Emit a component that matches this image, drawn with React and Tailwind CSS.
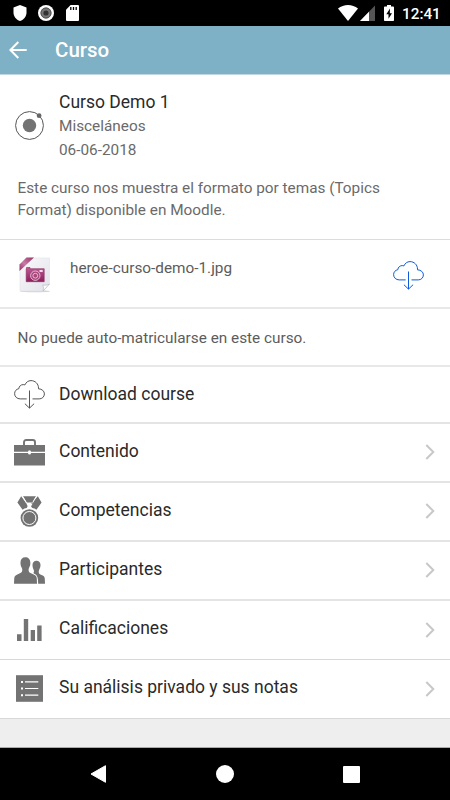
import React from "react";

function ShieldIcon() {
  return (
    <svg width="14" height="16" viewBox="0 0 14 16" className="shrink-0">
      <path d="M7 0l6.500 2.500v5.200c0 3.600-2.600 6.900-6.500 8.300C3.100 14.600.5 11.300.5 7.700V2.500z" fill="#fff" />
    </svg>
  );
}

function RecordIcon() {
  return (
    <svg width="16" height="16" viewBox="0 0 16 16" className="shrink-0">
      <circle cx="8" cy="8" r="8" fill="#fff" />
      <circle cx="8" cy="8" r="5.400" fill="#777" />
      <circle cx="8" cy="8" r="5.100" fill="none" stroke="#444" strokeWidth=".8" />
      <circle cx="8" cy="8" r="2.600" fill="#333" />
    </svg>
  );
}

function SdIcon() {
  return (
    <svg width="13" height="16" viewBox="0 0 13 16" className="shrink-0">
      <path d="M4.600 0H12a1 1 0 0 1 1 1v14a1 1 0 0 1-1 1H1a1 1 0 0 1-1-1V4.700z" fill="#fff" />
      <path d="M4.800 2v3M7.500 2v3M10.200 2v3" stroke="#000" strokeWidth="1.300" />
    </svg>
  );
}

function WifiIcon() {
  return (
    <svg width="20" height="16" viewBox="0 0 20 16" className="shrink-0">
      <path d="M0 3.600C5.700-1.200 14.300-1.200 20 3.600L10 16z" fill="#fff" />
    </svg>
  );
}

function SignalIcon() {
  return (
    <svg width="15" height="16" viewBox="0 0 15 16" className="shrink-0">
      <path d="M15 .5V16H0z" fill="#555" />
      <path d="M9 6.700V16H0z" fill="#fff" />
    </svg>
  );
}

function BatteryIcon() {
  return (
    <svg width="10" height="16" viewBox="0 0 10 16" className="shrink-0">
      <path d="M3 0h4v1.600h2.200c.5 0 .8.300.8.800v12.800c0 .5-.3.800-.8.800H.8c-.5 0-.8-.3-.8-.8V2.400c0-.5.3-.8.800-.8H3z" fill="#fff" />
      <path d="M6 3.600L2.300 9.300h2.200v4.500l3.500-5.600H5.800z" fill="#000" />
    </svg>
  );
}

function BackArrow() {
  return (
    <svg width="18" height="18" viewBox="0 0 18 18" className="shrink-0">
      <path d="M9.300 1L1.400 9l7.900 8M1.400 9H17.700" fill="none" stroke="#fff" strokeWidth="2" />
    </svg>
  );
}

function OrbitIcon() {
  return (
    <svg width="31" height="30" viewBox="0 0 31 30">
      <circle cx="15.500" cy="15.500" r="13.900" fill="none" stroke="#555" strokeWidth="1" />
      <circle cx="15.500" cy="15.500" r="6.700" fill="#737373" />
      <circle cx="25.100" cy="5.700" r="2.400" fill="#666" />
    </svg>
  );
}

function CloudDownload({ color }) {
  return (
    <svg width="31" height="29" viewBox="0 0 31 29" fill="none" stroke={color} strokeWidth="1">
      <path d="M12.700 18.900H6.200C3 18.900.6 16.600.6 13.700c0-2.700 1.800-4.600 4.200-5C5 6.300 6.900 4.600 9.200 4.600c.6 0 1.200.1 1.700.3C12 2.300 14.200.6 17 .6c4.200 0 7.500 3.300 7.500 7.400v.8c3.400.1 5.900 2.300 5.900 5.100 0 2.900-2.300 5-5.200 5h-6.700" />
      <path d="M15.500 10.500v17.500M10.900 23.700l4.600 4.400 4.600-4.400" />
    </svg>
  );
}

function ImageFileIcon() {
  return (
    <svg width="32" height="36" viewBox="0 0 32 36">
      <defs>
        <linearGradient id="paper" x1="0" y1="0" x2="1" y2="1">
          <stop offset="0" stopColor="#fafafc" />
          <stop offset="1" stopColor="#e1e2e9" />
        </linearGradient>
        <linearGradient id="camera" x1="0" y1="0" x2="0" y2="1">
          <stop offset="0" stopColor="#c05a96" />
          <stop offset="1" stopColor="#8c1f5c" />
        </linearGradient>
        <linearGradient id="ribbon" x1="1" y1="0" x2="0" y2="1">
          <stop offset="0" stopColor="#963064" />
          <stop offset=".55" stopColor="#c77ca6" />
          <stop offset="1" stopColor="#963064" />
        </linearGradient>
      </defs>
      <ellipse cx="16" cy="34.300" rx="15" ry="1" fill="#d3d3d8" />
      <path d="M1 1h29.500v26L24 34H1z" fill="url(#paper)" stroke="#e3e3e8" strokeWidth=".6" />
      <path d="M30.500 27c-2 1.300-4.300 1.400-6.700.9.800 2.200.9 4.300.2 6.100z" fill="#fff" stroke="#b9bac2" strokeWidth=".7" />
      <path d="M0 0h7.500L0 7.500z" fill="#fff" />
      <path d="M7.500.5h7.500L.5 14V7.500z" fill="url(#ribbon)" />
      <path d="M7.500 10.500h3.500v1.200h14.200v13H7.200V11.700h.3z" fill="url(#camera)" stroke="#8c2860" strokeWidth=".6" />
      <path d="M20.500 13h3.200v2h-3.200z" fill="#f2dce8" />
      <circle cx="16.300" cy="18.700" r="4.700" fill="#a8477b" stroke="#f0d6e4" strokeWidth=".8" />
      <circle cx="16.300" cy="18.700" r="2.400" fill="none" stroke="#f0d6e4" strokeWidth=".8" />
    </svg>
  );
}

function BriefcaseIcon() {
  return (
    <svg width="31" height="27" viewBox="0 0 31 27" className="mb-px">
      <path d="M10 6.500V3.200C10 1.800 10.800 1 12.200 1h6.600c1.400 0 2.200.8 2.200 2.200v3.300" fill="none" stroke="#737373" strokeWidth="1.900" />
      <path d="M0 6h31v6.800H17a1.500 1.500 0 0 0-3 0H0zM0 14h14a1.500 1.500 0 0 0 3 0h14v12.500H0z" fill="#737373" />
    </svg>
  );
}

function MedalIcon() {
  return (
    <svg width="25" height="31" viewBox="0 0 25 31">
      <path d="M4.200.2L.4 6.500l5.200 7.300c1.200-.9 2.500-1.500 4.100-1.700L11 9.600zM20.800.2l3.800 6.300-5.200 7.300c-1.200-.9-2.500-1.500-4.100-1.700L12.900 9zM6 .2h13l-3.900 6.300h-5.200z" fill="#737373" />
      <path d="M5.400.2l3.900 6.600M19.600.2l-3.900 6.600" stroke="#fff" strokeWidth=".9" />
      <path d="M9.400 7.600h6.200l-2.400 4.600h-1.500z" fill="#fff" />
      <circle cx="12.400" cy="22" r="8.800" fill="#737373" />
      <circle cx="12.400" cy="22" r="6.500" fill="none" stroke="#fff" strokeWidth="1" />
    </svg>
  );
}

function PeopleIcon() {
  return (
    <svg width="31" height="27" viewBox="0 0 31 27" fill="#737373">
      <path d="M22.500 3.800c2.500 0 4 1.700 4 4.300 0 2-.4 3-1.400 4.900-.4.800-.5 1.700-.3 2.500.2 1 .6 1.500 1.600 1.900l2.300 1c1.400.7 2 1.500 2.100 3.400l.2 4.900h-6.800l-.3-4.500c-.3-3-1.400-4.500-3.700-5.500-.6-.3-.9-.7-.4-1.700.4-.8.200-1.300-.1-2.100-.8-1.800-1.200-2.900-1.200-4.800 0-2.600 1.500-4.300 4-4.300z" />
      <path d="M11.300.3c3 0 5 2 5 5.200 0 1 .2 1.500-.1 2.600-.3.800-.5 1.600-1 2.300-.3.700-.6 1.200-.6 2.200 0 1.800.4 2.900 1.900 3.500l3.600 1.600c2 .9 2.500 1.700 2.700 4l.2 5H0l.2-4.600c.1-2.600.8-3.600 2.700-4.400l3.500-1.600c1.400-.7 1.900-1.700 1.900-3.500 0-1-.4-1.500-.7-2.200-.5-.8-.8-1.500-.9-2.300-.3-1-.2-1.600-.2-2.600 0-3.200 1.800-5.200 4.800-5.200z" />
    </svg>
  );
}

function BarsIcon() {
  return (
    <svg width="25" height="22" viewBox="0 0 25 22" fill="#737373">
      <path d="M0 15.200h4.500V22H0zM6.800 0h4.400v22H6.800zM13.700 11H18v11h-4.300zM20.200 6.500h4.400V22h-4.400z" />
    </svg>
  );
}

function NotesIcon() {
  return (
    <svg width="27" height="27" viewBox="0 0 27 27" className="mb-px">
      <path d="M0 .2h27v26.600H0z" fill="#737373" />
      <path d="M5 6.900h2M5 13.500h2M5 20.200h2" stroke="#fff" strokeWidth="2" />
      <path d="M9 6.900h13.300M9 13.500h13.300M9 20.200h13.300" stroke="#fff" strokeWidth="1.200" />
    </svg>
  );
}

function Chevron() {
  return (
    <svg width="10" height="16" viewBox="0 0 10 16" className="mb-px mr-[15px] shrink-0">
      <path d="M1.300 1l7 7-7 7" fill="none" stroke="#c8c8c8" strokeWidth="2" />
    </svg>
  );
}

function Row({
  icon,
  label,
  height = "h-[59px]",
  border = "border-b-2 border-[#e4e4e4]",
  lift = "pb-[3px]",
  chevron = true,
}) {
  return (
    <div className={`flex shrink-0 items-center bg-white ${border} ${height}`}>
      <div className="flex w-[59px] shrink-0 justify-center">{icon}</div>
      <div className={`flex-1 whitespace-nowrap text-[17.5px] leading-6 text-[#2a2a2a] ${lift}`}>{label}</div>
      {chevron && <Chevron />}
    </div>
  );
}

export default function App() {
  return (
    <div className="flex h-[800px] w-[450px] flex-col overflow-hidden bg-[#eee] font-['Roboto',sans-serif]">
      <div className="flex h-[26px] shrink-0 items-center justify-between bg-black pl-[13px] pr-[9px]">
        <div className="flex items-center">
          <ShieldIcon />
          <div className="w-[11px]" />
          <RecordIcon />
          <div className="w-[12px]" />
          <SdIcon />
        </div>
        <div className="flex items-center">
          <WifiIcon />
          <div className="w-[2px]" />
          <SignalIcon />
          <div className="w-[9px]" />
          <BatteryIcon />
          <div className="w-[8px]" />
          <span className="w-[39px] pt-[2px] text-[15.3px] font-medium leading-4 text-white">12:41</span>
        </div>
      </div>

      <div className="flex h-[49px] shrink-0 items-center border-b border-[#bfd7e2] bg-[#7eb0c6] pl-[9px]">
        <BackArrow />
        <h1 className="ml-7 text-[20.5px] font-medium leading-6 text-white">Curso</h1>
      </div>

      <div className="h-[165px] shrink-0 border-b border-[#dcdcdc] bg-white">
        <div className="flex pt-[15px]">
          <div className="flex w-[59px] shrink-0 justify-center pt-5">
            <OrbitIcon />
          </div>
          <div>
            <div className="text-[17.5px] leading-6 text-[#2a2a2a]">Curso Demo 1</div>
            <div className="pt-px text-[15.35px] leading-[23.5px] text-[#6a6a6a]">Misceláneos</div>
            <div className="text-[15.35px] leading-[23.5px] text-[#6a6a6a]">06-06-2018</div>
          </div>
        </div>
        <p className="mt-[15px] whitespace-nowrap pl-[17.5px] text-[15.33px] leading-[22px] text-[#6a6a6a]">
          Este curso nos muestra el formato por temas (Topics
          <br />
          Format) disponible en Moodle.
        </p>
      </div>

      <div className="flex h-[69px] shrink-0 items-center border-b-2 border-[#e8e8e8] bg-white">
        <div className="w-[70px] shrink-0 pl-[19px] pt-[2px]">
          <ImageFileIcon />
        </div>
        <div className="flex-1 pb-[12px] text-[15.33px] leading-6 text-[#5c5c5c]">heroe-curso-demo-1.jpg</div>
        <div className="mr-[26px] pt-[3px]">
          <CloudDownload color="#0f5bd8" />
        </div>
      </div>

      <div className="flex h-[58px] shrink-0 items-center border-b-2 border-[#e8e8e8] bg-white pl-[17.5px] pt-[2px] text-[15.33px] text-[#5c5c5c]">
        No puede auto-matricularse en este curso.
      </div>

      <Row
        icon={<CloudDownload color="#555" />}
        label="Download course"
        height="h-[57px]"
        lift="pb-px"
        chevron={false}
      />
      <Row icon={<BriefcaseIcon />} label="Contenido" />
      <Row icon={<MedalIcon />} label="Competencias" />
      <Row icon={<PeopleIcon />} label="Participantes" />
      <Row icon={<BarsIcon />} label="Calificaciones" border="border-b border-[#d8d8d8]" lift="pb-1" />
      <Row icon={<NotesIcon />} label="Su análisis privado y sus notas" border="border-b border-[#d8d8d8]" lift="pb-1" />

      <div className="flex-1" />

      <div className="flex h-[53px] shrink-0 items-center justify-between border-t border-[#aaa] bg-black px-[90px]">
        <svg width="17" height="18" viewBox="0 0 17 18">
          <path d="M15.500 .7L1 9l14.500 8.300z" fill="#fff" stroke="#fff" strokeLinejoin="round" />
        </svg>
        <svg width="18" height="18" viewBox="0 0 18 18">
          <circle cx="9" cy="9" r="9" fill="#fff" />
        </svg>
        <div className="h-[17px] w-[17px] rounded-[1px] bg-white" />
      </div>
    </div>
  );
}
